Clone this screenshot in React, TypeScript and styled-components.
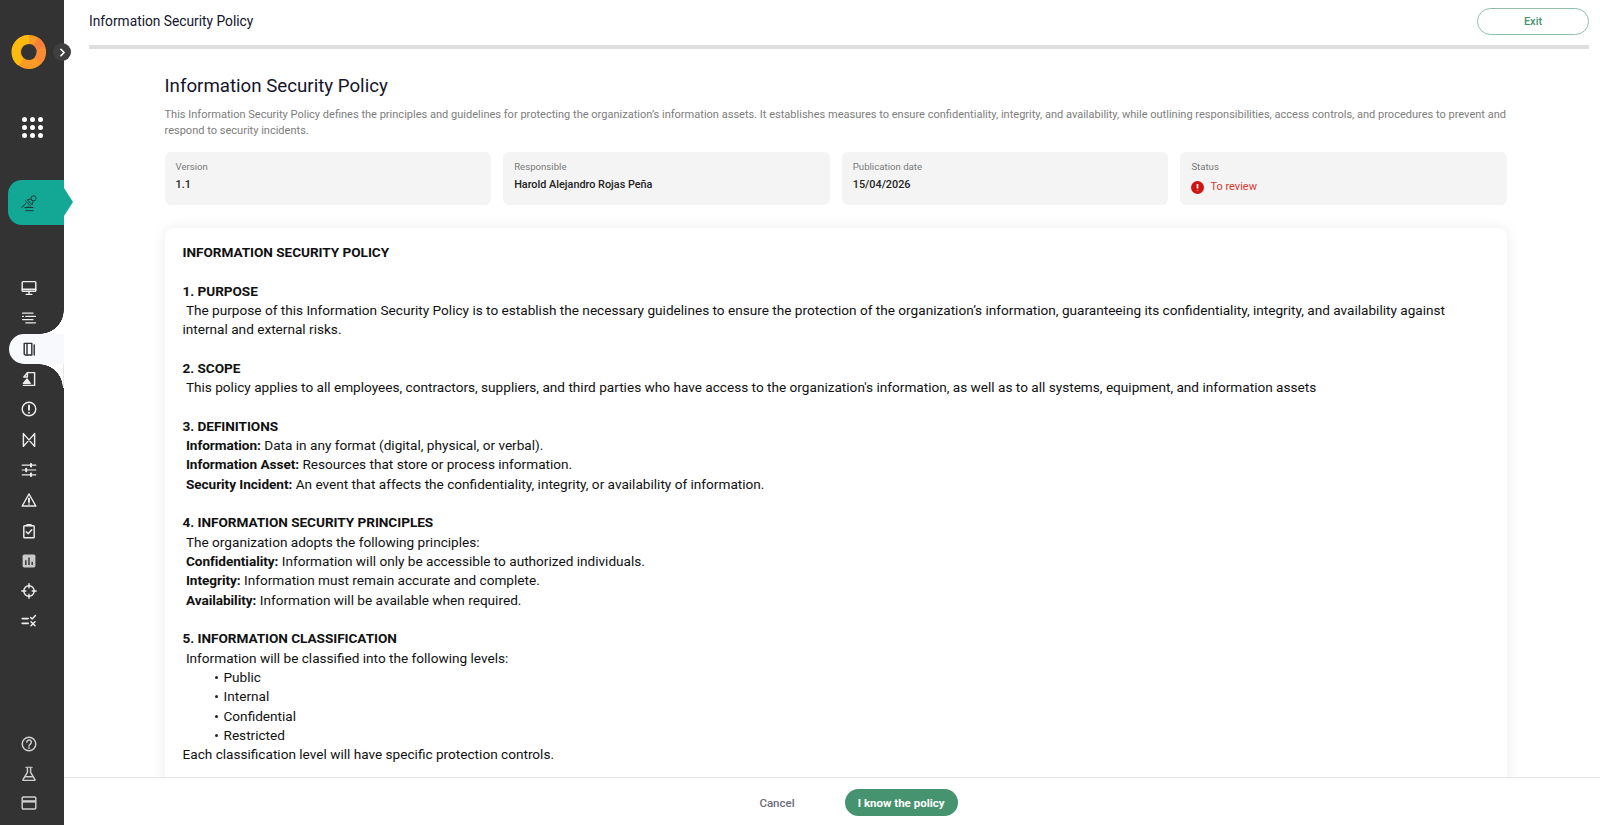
import React from 'react';
import styled, { createGlobalStyle } from 'styled-components';
import { ChevronRight } from 'lucide-react';

const GlobalStyle = createGlobalStyle`
  html, body, #root {
    height: 100%;
  }
  body {
    margin: 0;
    background: #fff;
    color: #111;
    font-family: Roboto, "Liberation Sans", sans-serif;
    overflow: hidden;
  }
  * {
    box-sizing: border-box;
  }
`;

type IconProps = { size?: number };

const Svg = ({ size = 16, children }: IconProps & { children: React.ReactNode }) => (
  <svg
    width={size}
    height={size}
    viewBox="0 0 20 20"
    fill="none"
    stroke="currentColor"
    strokeWidth="1.8"
    strokeLinecap="round"
    strokeLinejoin="round"
  >
    {children}
  </svg>
);

const MonitorIcon = () => (
  <Svg>
    <rect x="1.5" y="2" width="17" height="12" rx="1" />
    <path d="M1.5 11.5h17M10 14v3.5M6.5 18h7" />
  </Svg>
);
const ListIcon = () => (
  <Svg>
    <path d="M2 4h13M6 8h12M2 12h13M6 16h9" strokeWidth="1.6" />
    <path d="M2 8h1M16 16h2" strokeWidth="1.6" />
  </Svg>
);
const BookIcon = () => (
  <Svg>
    <path d="M4 3h9.500v14.500H6a2 2 0 0 1-2-2z" />
    <path d="M7.500 3v14.500M16.500 5v12.500" />
  </Svg>
);
const FileIcon = () => (
  <Svg>
    <path d="M8 2h9v16H3" />
    <path d="M8 2v5.500H3.500z" />
    <path d="M3 15.500l4.500-5.500 4 5.500z" fill="currentColor" />
  </Svg>
);
const AlertIcon = () => (
  <Svg>
    <circle cx="10" cy="10" r="8.500" />
    <path d="M10 5.500v5.500" strokeWidth="2.400" />
    <path d="M10 14.500v.1" strokeWidth="2.400" />
  </Svg>
);
const BowtieIcon = () => (
  <Svg>
    <path d="M3 2v16L17 2v16z" />
  </Svg>
);
const SlidersIcon = () => (
  <Svg>
    <path d="M1.500 4h17M1.500 10h17M1.500 16h17" strokeWidth="1.500" />
    <path d="M12.500 2.500v3M6.500 8.500v3M12.500 14.500v3" strokeWidth="2.600" />
  </Svg>
);
const WarningIcon = () => (
  <Svg>
    <path d="M10 2.500L18.500 17.500H1.500z" />
    <path d="M10 8v4.500" strokeWidth="2.400" />
    <path d="M10 15v.1" strokeWidth="2" />
  </Svg>
);
const ClipboardIcon = () => (
  <Svg>
    <rect x="3.500" y="3.500" width="13" height="15" rx="1" />
    <path d="M7.500 3.500V2h5v1.500" fill="currentColor" />
    <path d="M6.500 11l2.500 2.500 4.500-5" />
  </Svg>
);
const ChartIcon = () => (
  <svg width={16} height={16} viewBox="0 0 20 20">
    <rect x="2" y="2" width="16" height="16" rx="2" fill="#c9c9c9" />
    <path d="M6 15V9M10 15V5.500M14 15v-4" stroke="#333" strokeWidth="1.800" />
  </svg>
);
const CrosshairIcon = () => (
  <Svg>
    <circle cx="10" cy="10" r="6.500" />
    <path d="M10 1v5M10 14v5M1 10h5M14 10h5" />
  </Svg>
);
const ListXIcon = () => (
  <Svg>
    <path d="M1.500 7h7.500M1.500 13h7.500" strokeWidth="2" />
    <path d="M12 5.500l2 2 4-4.500M12.500 11l5 5M17.500 11l-5 5" />
  </Svg>
);
const HelpIcon = () => (
  <Svg>
    <circle cx="10" cy="10" r="8.500" />
    <path d="M7.300 7.800a2.800 2.800 0 1 1 4.300 2.300c-1 .7-1.600 1.200-1.600 2.400" />
    <path d="M10 15v.1" strokeWidth="2.200" />
  </Svg>
);
const FlaskIcon = () => (
  <Svg>
    <path d="M6 1.500h8" strokeWidth="1.400" />
    <path d="M8 2v6L2.500 17a.7.7 0 0 0 .6 1h13.800a.7.7 0 0 0 .6-1L12 8V2" />
    <path d="M5.500 13.500h9" />
  </Svg>
);
const CardIcon = () => (
  <Svg>
    <rect x="1.500" y="2.500" width="17" height="15" rx="1.500" />
    <path d="M1.500 8h17" strokeWidth="3" strokeLinecap="butt" />
  </Svg>
);

const PinIcon = () => (
  <svg width="18" height="18" viewBox="0 0 20 20" fill="none" stroke="#1e3b37" strokeWidth="1.100">
    <circle cx="15" cy="4.800" r="2.800" />
    <path d="M3.500 13.500L7 10M6 7.500l6.500 6.500M8 6.500l5.500 5.500 1-4-2.500-2.500zM9.500 13.500L7 16M5 15h10" />
    <path d="M1.500 15.500L5 12M6 18.500h9" />
  </svg>
);

const Logo = () => (
  <svg width="36" height="36" viewBox="0 0 36 36">
    <circle cx="18" cy="18" r="12.500" fill="none" stroke="#fb9a24" strokeWidth="9" />
    <path d="M18 5.500A12.500 12.500 0 0 0 10 28" fill="none" stroke="#fdbb0e" strokeWidth="9" />
    <path d="M25 7.500A12.500 12.500 0 0 1 30 15" fill="none" stroke="#f97f3d" strokeWidth="9" />
    <path d="M30 16A12.500 12.500 0 0 1 27 26.500" fill="none" stroke="#fa8a35" strokeWidth="9" />
  </svg>
);

const Shell = styled.div`
  display: flex;
  height: 825px;
  overflow: hidden;
`;

const Sidebar = styled.aside`
  width: 64px;
  flex: none;
  position: relative;
  z-index: 2;
  display: flex;
  flex-direction: column;
  background: #333333;
  color: #ededed;
`;

const LogoRow = styled.div`
  height: 36px;
  margin-top: 34px;
  padding-left: 11px;
  position: relative;
`;

const ExpandButton = styled.button`
  position: absolute;
  left: 53px;
  top: 9px;
  width: 18px;
  height: 18px;
  padding: 0;
  border: 0;
  border-radius: 50%;
  background: #3f3f3f;
  color: #fff;
  display: flex;
  align-items: center;
  justify-content: center;
`;

const AppsGrid = styled.div`
  margin: 47px 0 0 22px;
  width: 20px;
  display: grid;
  grid-template-columns: repeat(3, 5px);
  grid-auto-rows: 5px;
  gap: 3px;
  justify-content: space-between;
`;

const Dot = styled.span`
  border-radius: 50%;
  background: #fff;
`;

const ActiveModule = styled.div`
  margin: 42px 0 0 8px;
  width: 56px;
  height: 45px;
  position: relative;
  background: #13a795;
  border-radius: 14px 0 0 14px;
  display: flex;
  align-items: center;
  padding-left: 12px;

  &::after {
    content: '';
    position: absolute;
    left: 56px;
    top: 8px;
    border-style: solid;
    border-width: 14px 0 14px 9px;
    border-color: transparent transparent transparent #13a795;
  }
`;

const NavList = styled.nav`
  margin-top: 48px;
  display: flex;
  flex-direction: column;
`;

const NavItem = styled.div<{ $active?: boolean }>`
  height: 30.3px;
  display: flex;
  align-items: center;
  padding-left: 20.500px;
  position: relative;
  color: #ededed;

  ${({ $active }) =>
    $active &&
    `
    margin-left: 9px;
    padding-left: 11.500px;
    border-radius: 16px 0 0 16px;
    background: #f8f9fc;
    color: #333333;
    &::before, &::after {
      content: '';
      position: absolute;
      right: 0;
      width: 24px;
      height: 24px;
    }
    &::before {
      bottom: 100%;
      background: radial-gradient(circle at 0 0, #333333 23.500px, #ffffff 24px);
    }
    &::after {
      top: 100%;
      background: radial-gradient(circle at 0 100%, #333333 23.500px, #ffffff 24px);
      border-right: 1px solid #e6e6e6;
    }
  `}
`;

const BottomNav = styled.div`
  margin-top: auto;
  padding: 0 0 14px 20.500px;
  display: flex;
  flex-direction: column;
  gap: 13.500px;
  color: #d0d0d0;
`;

const Main = styled.main`
  flex: 1;
  min-width: 0;
  display: flex;
  flex-direction: column;
  background: #fff;
`;

const TopBar = styled.header`
  height: 45px;
  flex: none;
  padding: 0 11px 3px 25px;
  display: flex;
  align-items: center;
  justify-content: space-between;
`;

const TopTitle = styled.span`
  font-size: 13.750px;
  color: #14142b;
`;

const ExitButton = styled.button`
  width: 112px;
  height: 27px;
  padding: 0;
  background: #fff;
  border: 1px solid #8fbfa9;
  border-radius: 14px;
  color: #45936f;
  font: 500 11px Roboto, sans-serif;
`;

const ProgressTrack = styled.div`
  height: 4px;
  flex: none;
  margin: 0 11px 0 25px;
  background: #dedede;
`;

const Scroller = styled.div`
  flex: 1;
  min-height: 0;
  overflow: hidden;
  padding: 0 93px 0 100.500px;
`;

const PageTitle = styled.h1`
  margin: 25px 0 0;
  font-size: 18.700px;
  line-height: 24px;
  font-weight: 400;
  color: #14142b;
`;

const Description = styled.p`
  margin: 9px 0 0;
  font-size: 11.040px;
  line-height: 16px;
  color: #7d7d7d;
`;

const MetaGrid = styled.div`
  margin-top: 13px;
  display: grid;
  grid-template-columns: repeat(4, 1fr);
  gap: 12px;
`;

const MetaCard = styled.div`
  height: 53px;
  padding: 9px 11px;
  border-radius: 6px;
  background: #f4f4f4;
`;

const MetaLabel = styled.div`
  font-size: 9.640px;
  line-height: 12px;
  color: #7a7a7a;
`;

const MetaValue = styled.div<{ $alert?: boolean }>`
  margin-top: ${({ $alert }) => ($alert ? '7px' : '5px')};
  font-size: ${({ $alert }) => ($alert ? '11px' : '10.850px')};
  line-height: 14px;
  font-weight: ${({ $alert }) => ($alert ? 400 : 500)};
  color: ${({ $alert }) => ($alert ? '#d8392f' : '#222')};
  display: flex;
  align-items: center;
  gap: 6px;
`;

const PolicyPanel = styled.article`
  margin-top: 23px;
  padding: 15px 18px 40px;
  border-radius: 8px;
  background: #fff;
  box-shadow: 0 0 14px rgba(0, 0, 0, 0.08);
  font-size: 13.620px;
  line-height: 19.320px;
  color: #111;
`;

const Line = styled.div<{ $gap?: boolean }>`
  white-space: pre-wrap;
  margin-top: ${({ $gap }) => ($gap ? '19.32px' : '0')};
  b {
    font-weight: 700;
    letter-spacing: -0.05px;
  }
`;

const Levels = styled.ul`
  list-style: none;
  margin: 0;
  padding: 0 0 0 32px;
`;

const Level = styled.li`
  position: relative;
  padding-left: 9px;

  &::before {
    content: '';
    position: absolute;
    left: 0;
    top: 8px;
    width: 3px;
    height: 3px;
    border-radius: 50%;
    background: #222;
  }
`;

const Footer = styled.footer`
  height: 48px;
  flex: none;
  border-top: 1px solid #e6e6e6;
  display: flex;
  align-items: center;
  justify-content: center;
  gap: 50px;
  background: #fff;
  padding: 2px 0 0 53px;
`;

const CancelButton = styled.button`
  padding: 0;
  border: 0;
  background: none;
  color: #6d6d78;
  font: 500 11.500px Roboto, sans-serif;
`;

const PrimaryButton = styled.button`
  width: 113px;
  height: 27px;
  padding: 0;
  border: 0;
  border-radius: 14px;
  background: #45936f;
  color: #fff;
  font: 700 11.500px Roboto, sans-serif;
`;

const navIcons = [
  <MonitorIcon />,
  <ListIcon />,
  <BookIcon />,
  <FileIcon />,
  <AlertIcon />,
  <BowtieIcon />,
  <SlidersIcon />,
  <WarningIcon />,
  <ClipboardIcon />,
  <ChartIcon />,
  <CrosshairIcon />,
  <ListXIcon />,
];

const metaItems = [
  { label: 'Version', value: '1.1' },
  { label: 'Responsible', value: 'Harold Alejandro Rojas Peña' },
  { label: 'Publication date', value: '15/04/2026' },
];

export default function App() {
  return (
    <Shell>
      <GlobalStyle />
      <Sidebar>
        <LogoRow>
          <Logo />
          <ExpandButton aria-label="Expand menu">
            <ChevronRight size={13} strokeWidth={3} />
          </ExpandButton>
        </LogoRow>
        <AppsGrid>
          {Array.from({ length: 9 }, (_, i) => (
            <Dot key={i} />
          ))}
        </AppsGrid>
        <ActiveModule>
          <PinIcon />
        </ActiveModule>
        <NavList>
          {navIcons.map((icon, i) => (
            <NavItem key={i} $active={i === 2}>
              {icon}
            </NavItem>
          ))}
        </NavList>
        <BottomNav>
          <HelpIcon />
          <FlaskIcon />
          <CardIcon />
        </BottomNav>
      </Sidebar>
      <Main>
        <TopBar>
          <TopTitle>Information Security Policy</TopTitle>
          <ExitButton>Exit</ExitButton>
        </TopBar>
        <ProgressTrack />
        <Scroller>
          <PageTitle>Information Security Policy</PageTitle>
          <Description>
            This Information Security Policy defines the principles and guidelines for protecting the
            organization’s information assets. It establishes measures to ensure confidentiality,
            integrity, and availability, while outlining responsibilities, access controls, and
            procedures to prevent and respond to security incidents.
          </Description>
          <MetaGrid>
            {metaItems.map(({ label, value }) => (
              <MetaCard key={label}>
                <MetaLabel>{label}</MetaLabel>
                <MetaValue>{value}</MetaValue>
              </MetaCard>
            ))}
            <MetaCard>
              <MetaLabel>Status</MetaLabel>
              <MetaValue $alert>
                <svg width="13" height="13" viewBox="0 0 20 20">
                  <circle cx="10" cy="10" r="10" fill="#cf1512" />
                  <path d="M10 4.500v7M10 14.500v1" stroke="#fff" strokeWidth="2.600" />
                </svg>
                To review
              </MetaValue>
            </MetaCard>
          </MetaGrid>
          <PolicyPanel>
            <Line>
              <b>INFORMATION SECURITY POLICY</b>
            </Line>
            <Line $gap>
              <b>1. PURPOSE</b>
            </Line>
            <Line>
              {' '}The purpose of this Information Security Policy is to establish the necessary
              guidelines to ensure the protection of the organization’s information, guaranteeing its
              confidentiality, integrity, and availability against internal and external risks.
            </Line>
            <Line $gap>
              <b>2. SCOPE</b>
            </Line>
            <Line>
              {' '}This policy applies to all employees, contractors, suppliers, and third parties who
              have access to the organization's information, as well as to all systems, equipment,
              and information assets
            </Line>
            <Line $gap>
              <b>3. DEFINITIONS</b>
            </Line>
            <Line>
              {' '}<b>Information:</b> Data in any format (digital, physical, or verbal).
            </Line>
            <Line>
              {' '}<b>Information Asset:</b> Resources that store or process information.
            </Line>
            <Line>
              {' '}<b>Security Incident:</b> An event that affects the confidentiality, integrity, or
              availability of information.
            </Line>
            <Line $gap>
              <b>4. INFORMATION SECURITY PRINCIPLES</b>
            </Line>
            <Line> The organization adopts the following principles:</Line>
            <Line>
              {' '}<b>Confidentiality:</b> Information will only be accessible to authorized individuals.
            </Line>
            <Line>
              {' '}<b>Integrity:</b> Information must remain accurate and complete.
            </Line>
            <Line>
              {' '}<b>Availability:</b> Information will be available when required.
            </Line>
            <Line $gap>
              <b>5. INFORMATION CLASSIFICATION</b>
            </Line>
            <Line> Information will be classified into the following levels:</Line>
            <Levels>
              <Level>Public</Level>
              <Level>Internal</Level>
              <Level>Confidential</Level>
              <Level>Restricted</Level>
            </Levels>
            <Line>Each classification level will have specific protection controls.</Line>
          </PolicyPanel>
        </Scroller>
        <Footer>
          <CancelButton>Cancel</CancelButton>
          <PrimaryButton>I know the policy</PrimaryButton>
        </Footer>
      </Main>
    </Shell>
  );
}
